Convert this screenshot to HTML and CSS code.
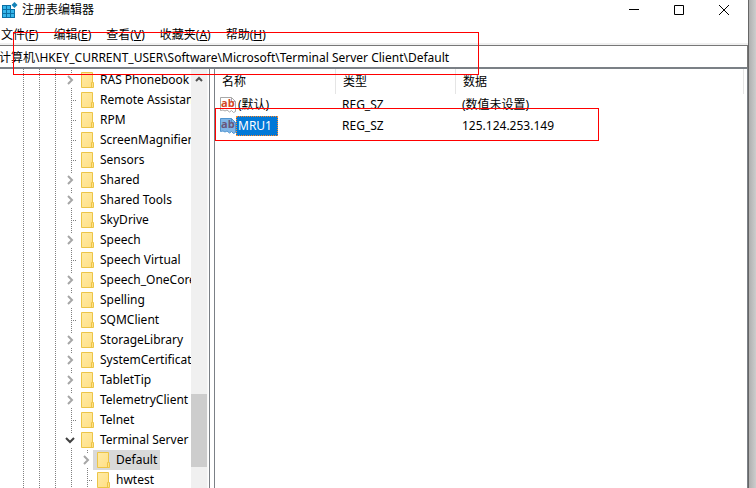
FILE: index.html
```html
<!DOCTYPE html>
<html lang="zh-CN">
<head>
    <meta charset="UTF-8">
    <meta name="viewport" content="width=device-width, initial-scale=1.0">
    <title>注册表编辑器</title>
    <link rel="stylesheet" href="styles.css">
</head>
<body>
    <svg class="defs" aria-hidden="true">
        <defs>
            <linearGradient id="paper" x1="0" y1="0" x2="1" y2="1">
                <stop offset="0" stop-color="#ffeba6"/>
                <stop offset="1" stop-color="#ffdf84"/>
            </linearGradient>
        </defs>
        <symbol id="folder" viewBox="0 0 13 16">
            <path d="M.5 .5h11v10h1v5H.5z" fill="url(#paper)" stroke="#ecc548"/>
            <path d="M10.5 15v-4.5h1" fill="none" stroke="#ecc548"/>
        </symbol>
        <symbol id="closed" viewBox="0 0 10 10">
            <path d="M3 1l4 4-4 4" fill="none" stroke="#a6a6a6" stroke-width="2"/>
        </symbol>
        <symbol id="opened" viewBox="0 0 10 10">
            <path d="M1 3l4 4 4-4" fill="none" stroke="#404040" stroke-width="2"/>
        </symbol>
        <symbol id="string" viewBox="0 0 16 16">
            <path class="sheet" d="M.5 .5h11l4 4v10l-2 1-2-2-2 1.500-2.500-2-2 1-2-1-2.500.500z"/>
            <path class="fold" d="M11.500 .5v4h4"/>
            <text x="1" y="10">ab</text>
        </symbol>
    </svg>

    <div class="window">
        <header class="titlebar">
            <svg class="app-icon" viewBox="0 0 16 16" aria-hidden="true">
                <path d="M0 3h9v4h4v9H0z" fill="#0b6fa4"/>
                <path d="M1 4h3v3H1zM5 4h3v3H5zM1 8h3v3H1zM5 8h3v3H5zM9 8h3v3H9zM1 12h3v3H1zM5 12h3v3H5zM9 12h3v3H9z" fill="#35b5e9"/>
                <path d="M12.500 0l3 3-3 3-3-3z" fill="#1583b8"/>
            </svg>
            <h1>注册表编辑器</h1>
            <div class="controls">
                <button type="button" aria-label="最小化"><svg viewBox="0 0 10 10"><path d="M0 4.500h10"/></svg></button>
                <button type="button" aria-label="最大化"><svg viewBox="0 0 10 10"><path d="M.5 .5h9v9h-9z"/></svg></button>
                <button type="button" aria-label="关闭"><svg viewBox="0 0 10 10"><path d="M0 0l10 10M10 0L0 10"/></svg></button>
            </div>
        </header>

        <nav class="menubar">
            <button type="button">文件(<u>F</u>)</button>
            <button type="button">编辑(<u>E</u>)</button>
            <button type="button">查看(<u>V</u>)</button>
            <button type="button">收藏夹(<u>A</u>)</button>
            <button type="button">帮助(<u>H</u>)</button>
        </nav>

        <input class="address" type="text" aria-label="地址" value="计算机\HKEY_CURRENT_USER\Software\Microsoft\Terminal Server Client\Default">

        <main class="panes">
            <div class="tree-pane">
                <ul class="tree">
                    <li><i class="node"><svg><use href="#closed"/></svg></i><span class="key"><svg><use href="#folder"/></svg>RAS Phonebook</span></li>
                    <li><i class="node leaf"></i><span class="key"><svg><use href="#folder"/></svg>Remote Assistance</span></li>
                    <li><i class="node leaf"></i><span class="key"><svg><use href="#folder"/></svg>RPM</span></li>
                    <li><i class="node leaf"></i><span class="key"><svg><use href="#folder"/></svg>ScreenMagnifier</span></li>
                    <li><i class="node leaf"></i><span class="key"><svg><use href="#folder"/></svg>Sensors</span></li>
                    <li><i class="node"><svg><use href="#closed"/></svg></i><span class="key"><svg><use href="#folder"/></svg>Shared</span></li>
                    <li><i class="node"><svg><use href="#closed"/></svg></i><span class="key"><svg><use href="#folder"/></svg>Shared Tools</span></li>
                    <li><i class="node leaf"></i><span class="key"><svg><use href="#folder"/></svg>SkyDrive</span></li>
                    <li><i class="node"><svg><use href="#closed"/></svg></i><span class="key"><svg><use href="#folder"/></svg>Speech</span></li>
                    <li><i class="node leaf"></i><span class="key"><svg><use href="#folder"/></svg>Speech Virtual</span></li>
                    <li><i class="node"><svg><use href="#closed"/></svg></i><span class="key"><svg><use href="#folder"/></svg>Speech_OneCore</span></li>
                    <li><i class="node"><svg><use href="#closed"/></svg></i><span class="key"><svg><use href="#folder"/></svg>Spelling</span></li>
                    <li><i class="node leaf"></i><span class="key"><svg><use href="#folder"/></svg>SQMClient</span></li>
                    <li><i class="node"><svg><use href="#closed"/></svg></i><span class="key"><svg><use href="#folder"/></svg>StorageLibrary</span></li>
                    <li><i class="node"><svg><use href="#closed"/></svg></i><span class="key"><svg><use href="#folder"/></svg>SystemCertificates</span></li>
                    <li><i class="node"><svg><use href="#closed"/></svg></i><span class="key"><svg><use href="#folder"/></svg>TabletTip</span></li>
                    <li><i class="node"><svg><use href="#closed"/></svg></i><span class="key"><svg><use href="#folder"/></svg>TelemetryClient</span></li>
                    <li><i class="node leaf"></i><span class="key"><svg><use href="#folder"/></svg>Telnet</span></li>
                    <li><i class="node"><svg><use href="#opened"/></svg></i><span class="key"><svg><use href="#folder"/></svg>Terminal Server Client</span></li>
                    <li class="child"><i class="node"><svg><use href="#closed"/></svg></i><span class="key selected"><svg><use href="#folder"/></svg>Default</span></li>
                    <li class="child"><i class="node leaf"></i><span class="key"><svg><use href="#folder"/></svg>hwtest</span></li>
                </ul>
                <div class="scrollbar">
                    <button type="button" aria-label="向上滚动"><svg viewBox="0 0 8 6"><path d="M1 5l3-3 3 3"/></svg></button>
                    <div class="thumb"></div>
                </div>
            </div>

            <div class="list-pane">
                <table class="values">
                    <thead>
                        <tr><th class="name">名称</th><th class="type">类型</th><th>数据</th></tr>
                    </thead>
                    <tbody>
                        <tr>
                            <td><span class="value"><svg><use href="#string"/></svg><span>(默认)</span></span></td>
                            <td>REG_SZ</td>
                            <td>(数值未设置)</td>
                        </tr>
                        <tr class="selected">
                            <td><span class="value"><svg><use href="#string"/></svg><span>MRU1</span></span></td>
                            <td>REG_SZ</td>
                            <td>125.124.253.149</td>
                        </tr>
                    </tbody>
                </table>
                <div class="mark mark-value"></div>
            </div>
        </main>
        <div class="mark mark-path"></div>
    </div>
</body>
</html>
```
FILE: styles.css
```css
:root {
    --text: #000;
    --edge: #7b8086;
    --face: #f0f0f0;
    --dots: #808080;
    --accent: #0078d7;
    --mark: #f00;
}

* {
    margin: 0;
    padding: 0;
    box-sizing: border-box;
}

body {
    height: 100vh;
    padding-right: 7px;
    overflow: hidden;
    background: linear-gradient(to left, #cdcdcd, #b0b0b0 7px);
    color: var(--text);
    font: 12px/20px "Noto Sans", "Noto Sans CJK SC", sans-serif;
}

button,
input {
    border: none;
    background: none;
    color: inherit;
    font: inherit;
}

.defs {
    position: absolute;
    width: 0;
    height: 0;
}

.window {
    position: relative;
    display: flex;
    flex-direction: column;
    height: 100%;
    background: #fff;
    border-right: 1px solid #666;
}

/* Title bar */
.titlebar {
    display: flex;
    align-items: center;
    height: 25px;
    padding: 0 2px 6px;
}

.app-icon {
    width: 16px;
    height: 16px;
    margin-right: 4px;
}

.titlebar h1 {
    flex: 1;
    font-size: 12px;
    font-weight: normal;
}

.controls {
    display: flex;
}

.controls button {
    display: flex;
    align-items: center;
    justify-content: center;
    width: 45px;
    height: 18px;
}

.controls svg {
    width: 10px;
    height: 10px;
    fill: none;
    stroke: #000;
}

/* Menu */
.menubar {
    display: flex;
    gap: 15px;
    height: 20px;
    padding-left: 1px;
    border-bottom: 2px solid var(--face);
}

.address {
    height: 24px;
    margin-left: -2px;
    border: 1px solid #777;
    border-bottom: 2px solid var(--edge);
}

/* Panes */
.panes {
    display: flex;
    flex: 1;
    min-height: 0;
}

.tree-pane {
    display: flex;
    width: 210px;
    padding-right: 1px;
    border-right: 1px solid var(--edge);
}

/* Dotted guides for the three outer levels */
.tree {
    flex: 1;
    min-width: 0;
    padding: 1px 0 0 63px;
    overflow: hidden;
    list-style: none;
    background: repeating-linear-gradient(var(--dots) 0 1px, #fff 1px 2px) 23px 0 / 1px 100% no-repeat,
        repeating-linear-gradient(var(--dots) 0 1px, #fff 1px 2px) 39px 0 / 1px 100% no-repeat,
        repeating-linear-gradient(var(--dots) 0 1px, #fff 1px 2px) 55px 0 / 1px 100% no-repeat;
}

.tree li {
    display: flex;
    height: 20px;
    white-space: nowrap;
}

.tree .child {
    padding-left: 16px;
    background: repeating-linear-gradient(var(--dots) 0 1px, #fff 1px 2px) 8px 0 / 1px 100% no-repeat;
}

.node {
    display: flex;
    flex: none;
    align-items: center;
    width: 14px;
    padding-left: 2px;
    background: repeating-linear-gradient(var(--dots) 0 1px, #fff 1px 2px) 8px 0 / 1px 100% no-repeat;
}

.node svg {
    width: 10px;
    height: 14px;
    background: #fff;
}

.leaf {
    background: repeating-linear-gradient(var(--dots) 0 1px, #fff 1px 2px) 8px 0 / 1px 100% no-repeat,
        repeating-linear-gradient(to right, var(--dots) 0 1px, #fff 1px 2px) 8px 10px / 6px 1px no-repeat;
}

.key {
    display: flex;
    align-items: center;
    padding: 0 3px 0 4px;
}

.key svg {
    flex: none;
    width: 13px;
    height: 16px;
    margin-right: 6px;
}

.key.selected {
    background: #d9d9d9;
}

.scrollbar {
    width: 17px;
    background: var(--face);
    border-right: 1px solid #f8f8f8;
}

.scrollbar button {
    display: flex;
    align-items: center;
    justify-content: center;
    width: 100%;
    height: 20px;
}

.scrollbar svg {
    width: 8px;
    height: 6px;
    fill: none;
    stroke: #505050;
    stroke-width: 2;
}

.thumb {
    height: 73px;
    margin-top: 305px;
    background: #cdcdcd;
}

.list-pane {
    position: relative;
    flex: 1;
    margin-left: 4px;
    padding-right: 3px;
    border: solid var(--edge);
    border-width: 0 1px;
}

.values {
    width: 100%;
    border-spacing: 0;
    table-layout: fixed;
}

.values th {
    height: 25px;
    padding-left: 7px;
    background: linear-gradient(#e5e5e5, #e5e5e5) right top / 1px 100% no-repeat;
    font-weight: normal;
    text-align: left;
}

.values .name {
    width: 121px;
}

.values .type {
    width: 120px;
}

.values td {
    height: 21px;
    padding-left: 6px;
}

.values td:first-child {
    padding-left: 5px;
}

.value {
    display: flex;
    align-items: center;
}

.value svg {
    width: 16px;
    height: 16px;
    fill: #d24726;
    font: bold 11px "Open Sans", sans-serif;
}

.value > span {
    padding: 0 6px 0 2px;
}

.sheet {
    fill: var(--sheet, #fff);
    stroke: var(--sheet-edge, #a8a8a8);
}

.fold {
    fill: none;
    stroke: var(--sheet-edge, #a8a8a8);
}

.values .selected svg {
    --sheet: #7fb5e6;
    --sheet-edge: #5095d0;
    fill: #69557a;
}

.selected .value > span {
    background: var(--accent);
    color: #fff;
    outline: 1px dotted #ff8728;
    outline-offset: -1px;
}

/* Red highlight frames */
.mark {
    position: absolute;
    border: 1px solid var(--mark);
    pointer-events: none;
}

.mark-path {
    top: 32px;
    left: 13px;
    width: 466px;
    height: 43px;
}

.mark-value {
    top: 39px;
    left: 0;
    width: 384px;
    height: 33px;
}
```
